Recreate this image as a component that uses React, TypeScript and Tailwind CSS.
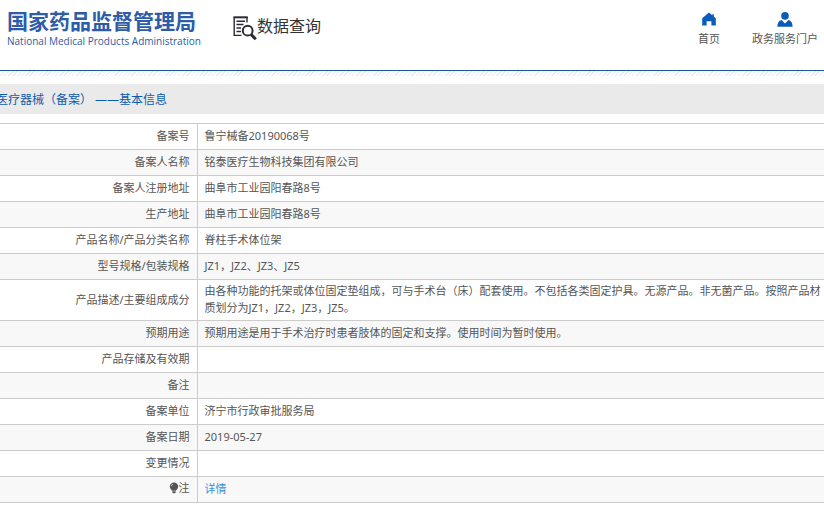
type RegistroFila = {
  label: string;
  value: string;
  icon?: boolean;
  link?: boolean;
};

const rows: RegistroFila[] = [
  { label: "备案号", value: "鲁宁械备20190068号" },
  { label: "备案人名称", value: "铭泰医疗生物科技集团有限公司" },
  { label: "备案人注册地址", value: "曲阜市工业园阳春路8号" },
  { label: "生产地址", value: "曲阜市工业园阳春路8号" },
  { label: "产品名称/产品分类名称", value: "脊柱手术体位架" },
  { label: "型号规格/包装规格", value: "JZ1，JZ2、JZ3、JZ5" },
  {
    label: "产品描述/主要组成成分",
    value:
      "由各种功能的托架或体位固定垫组成，可与手术台（床）配套使用。不包括各类固定护具。无源产品。非无菌产品。按照产品材质划分为JZ1，JZ2，JZ3，JZ5。",
  },
  {
    label: "预期用途",
    value: "预期用途是用于手术治疗时患者肢体的固定和支撑。使用时间为暂时使用。",
  },
  { label: "产品存储及有效期", value: "" },
  { label: "备注", value: "" },
  { label: "备案单位", value: "济宁市行政审批服务局" },
  { label: "备案日期", value: "2019-05-27" },
  { label: "变更情况", value: "" },
  { label: "注", value: "详情", icon: true, link: true },
];

function SearchDocIcon() {
  return (
    <svg width="24" height="25" viewBox="0 0 24 25" fill="none" stroke="#2b2b38" aria-hidden="true">
      <path d="M0.5 1.3h14.2" strokeWidth="2" />
      <path d="M1.2 1v19M14 1v5.5M0.5 19.4h8" strokeWidth="1.4" />
      <path d="M3.5 5.2h8.5M3.5 8.6h7M3.5 12h4.5M3.5 15.4h4.5" strokeWidth="1.5" />
      <circle cx="14.7" cy="14.7" r="4.9" strokeWidth="2" />
      <path d="M18.2 18.6l4.6 4.6" strokeWidth="3" />
    </svg>
  );
}

function HomeIcon() {
  return (
    <svg width="14" height="14" viewBox="0 0 14 14" fill="#0b5cb8" aria-hidden="true">
      <path d="M7 0.4L0.2 6.2V13.6h4.4V9.2h4.8v4.4h4.4V6.2l-2-1.7V2.2h-1.6v1z" />
    </svg>
  );
}

function UserIcon() {
  return (
    <svg width="16" height="15" viewBox="0 0 16 15" fill="#0b5cb8" aria-hidden="true">
      <circle cx="8" cy="3.9" r="3.8" />
      <path d="M0.4 14.8c0-3.9 1.2-6 4.2-6.8L8 11.4 11.4 8c3 .8 4.2 2.9 4.2 6.8z" />
    </svg>
  );
}

function BulbIcon() {
  return (
    <svg width="10" height="12" viewBox="0 0 10 12" aria-hidden="true">
      <path d="M5 0.4a4.2 4.2 0 0 1 4.2 4.2c0 2-1.6 3-2.2 4.2H3C2.4 7.6 0.8 6.6 0.8 4.6A4.2 4.2 0 0 1 5 0.4z" fill="#555" />
      <path d="M3.4 9.3h3.2v1l-0.9 1H4.3l-0.9-1z" fill="#555" />
      <path d="M2.3 4.3a2.5 2.5 0 0 1 1.7-2.2" stroke="#ccc" strokeWidth="0.9" fill="none" />
    </svg>
  );
}

export default function App() {
  return (
    <div className="min-h-screen overflow-x-hidden bg-white font-['Noto_Sans','Noto_Sans_CJK_SC',sans-serif] text-[11px] text-[#555]">
      {/* header */}
      <header className="flex h-[71px] items-start justify-between border-b border-[#1d559f] pr-[6px] pl-[7px]">
        <div className="flex items-start gap-8">
          <div className="pt-2 text-[#2d5ca8]">
            <h1 className="text-[21px] leading-[26px] font-bold whitespace-nowrap">国家药品监督管理局</h1>
            <p className="font-['Open_Sans',sans-serif] text-[10px] leading-[15px] font-medium whitespace-nowrap">
              National Medical Products Administration
            </p>
          </div>
          <div className="flex items-start pt-4 text-[#333]">
            <SearchDocIcon />
            <span className="text-[16px] leading-5 whitespace-nowrap">数据查询</span>
          </div>
        </div>

        <nav className="flex gap-8 pt-3">
          <a href="#" className="flex flex-col items-center gap-1 leading-[17px] whitespace-nowrap">
            <HomeIcon />
            首页
          </a>
          <a href="#" className="flex flex-col items-center gap-1 leading-4 whitespace-nowrap">
            <UserIcon />
            政务服务门户
          </a>
        </nav>
      </header>
      <div className="h-[5px] bg-[repeating-linear-gradient(135deg,#e6eaf5_0_1px,#fff_1px_3px)]"></div>

      <main className="pt-2">
        <h2 className="-ml-1 bg-[#eaeaea] pt-px text-[12px] leading-[29px] whitespace-pre text-[#0b5cad]">
          医疗器械（备案） ——基本信息
        </h2>

        <table className="mt-[9px] w-full border-collapse">
          <tbody>
            {rows.map((r) => (
              <tr key={r.label} className="border-y border-[#ccc] even:bg-[#f8f8f8]">
                <th
                  scope="row"
                  className="w-[197px] border-r border-[#ccc] pt-[2px] pr-[7px] pb-1 text-right leading-[17px] font-normal"
                >
                  <span className="inline-flex items-center">
                    {r.icon && <BulbIcon />}
                    {r.label}
                  </span>
                </th>
                <td className="h-[26px] pt-[2px] pb-1 pl-[7px] leading-[17px]">
                  {r.link ? (
                    <a href="#" className="text-[#3a8fd8]">{r.value}</a>
                  ) : (
                    r.value
                  )}
                </td>
              </tr>
            ))}
          </tbody>
        </table>
      </main>
    </div>
  );
}
